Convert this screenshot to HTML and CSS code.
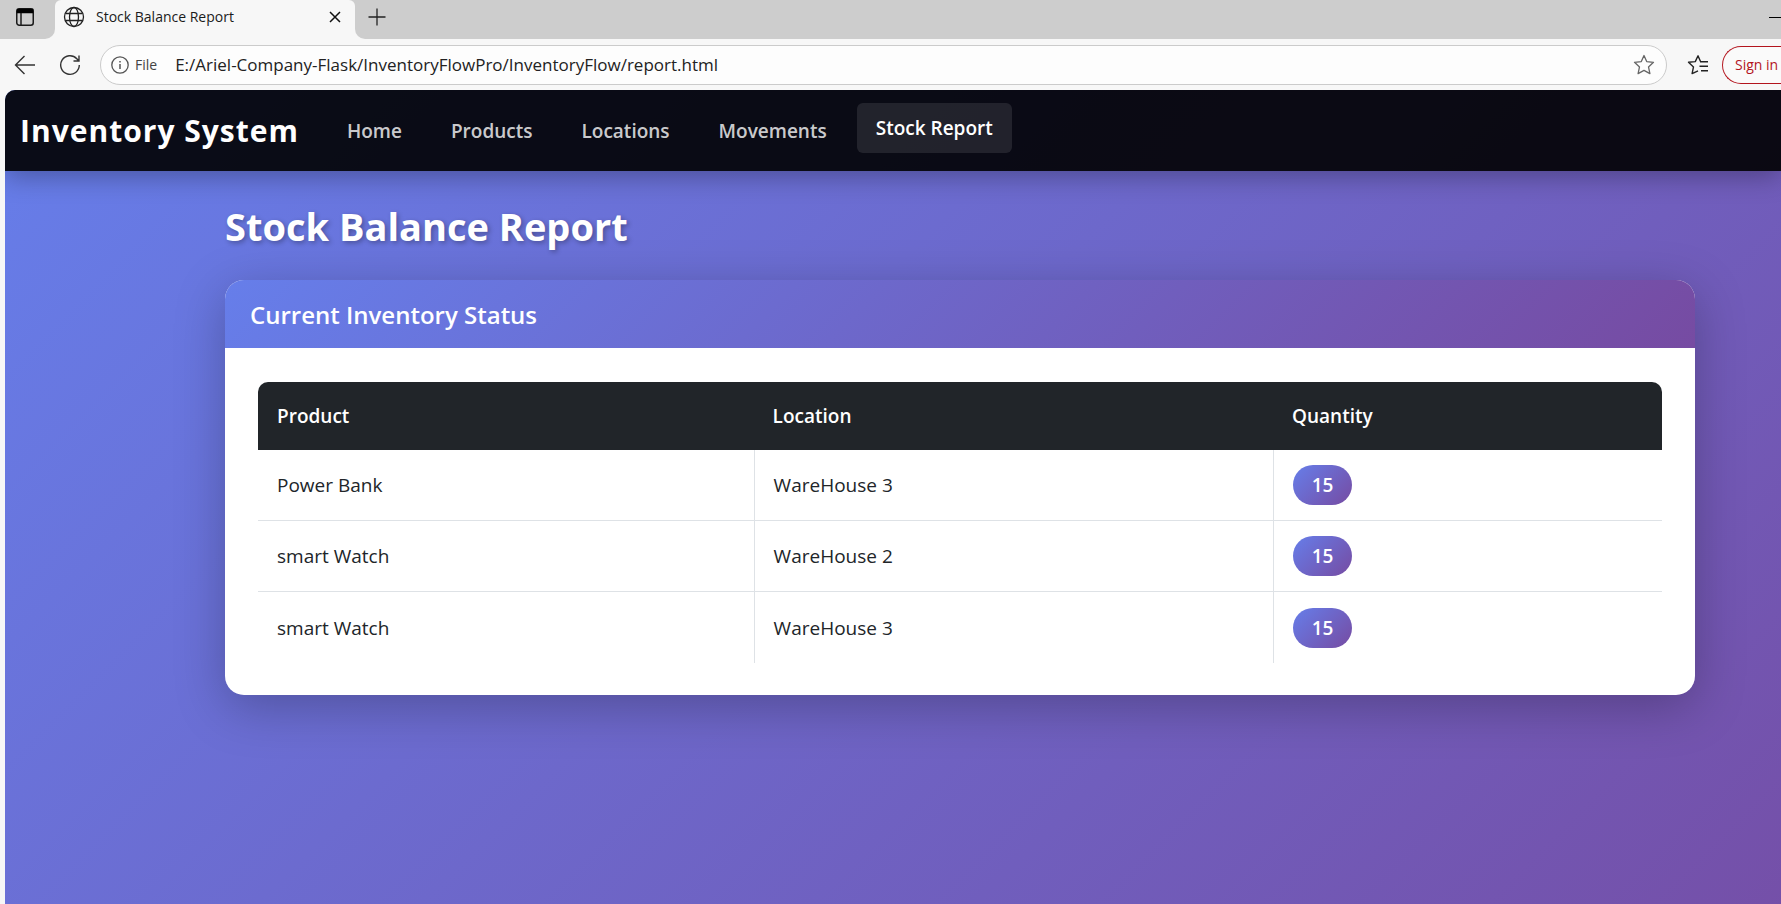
FILE: index.html
```html
<!DOCTYPE html>
<html lang="en">
<head>
<meta charset="utf-8">
<title>Stock Balance Report</title>
<link rel="stylesheet" href="styles.css">
</head>
<body>
<header class="browser">
  <div class="tabstrip">
    <div class="tab-actions">
      <button class="icon-btn" aria-label="Tab actions">
        <svg width="20" height="20" viewBox="0 0 20 20" fill="none" stroke="#1b1b1b" stroke-width="1.5"><rect x="1.75" y="1.75" width="16.5" height="16.5" rx="2.5"/><path d="M2.500 2.500h15v3h-15z" fill="#000" stroke="#000"/><path d="M6 6v12"/></svg>
      </button>
    </div>
    <div class="tab-slot">
      <div class="tab">
        <svg width="22" height="22" viewBox="0 0 22 22" fill="none" stroke="#222" stroke-width="1.3"><circle cx="11" cy="11" r="9.5"/><ellipse cx="11" cy="11" rx="4.5" ry="9.5"/><path d="M2.5 7.5h17M2.5 14.5h17"/></svg>
        <span class="tab-title">Stock Balance Report</span>
        <button class="icon-btn" aria-label="Close tab">
          <svg width="12" height="12" viewBox="0 0 12 12" fill="none" stroke="#111" stroke-width="1.5"><path d="M1 1l10 10M11 1L1 11"/></svg>
        </button>
      </div>
    </div>
    <div class="tab-rest">
      <button class="icon-btn" aria-label="New tab">
        <svg width="18" height="18" viewBox="0 0 18 18" fill="none" stroke="#222" stroke-width="1.3"><path d="M9 .5v17M.5 9h17"/></svg>
      </button>
      <button class="icon-btn" aria-label="Minimize">
        <svg width="12" height="12" viewBox="0 0 12 12" fill="none" stroke="#000"><path d="M0 6.5h12"/></svg>
      </button>
    </div>
  </div>
  <div class="toolbar">
    <button class="icon-btn" aria-label="Back">
      <svg width="22" height="20" viewBox="0 0 22 20" fill="none" stroke="#333" stroke-width="1.4"><path d="M21 10H1.5M10.500 1L1.500 10l9 9"/></svg>
    </button>
    <button class="icon-btn" aria-label="Refresh">
      <svg width="22" height="22" viewBox="0 0 22 22" fill="none" stroke="#333" stroke-width="1.4"><path d="M20.300 11A9.300 9.300 0 1 1 17.800 4.700L19.500 6.500M20 1.500v5.500h-5.500"/></svg>
    </button>
    <div class="address">
      <svg width="18" height="18" viewBox="0 0 18 18" fill="none" stroke="#555" stroke-width="1.3"><circle cx="9" cy="9" r="8.200"/><path d="M9 8v5M9 5v1.500" stroke-width="1.500"/></svg>
      <label class="scheme" for="url">File</label>
      <input class="url" id="url" type="text" value="E:/Ariel-Company-Flask/InventoryFlowPro/InventoryFlow/report.html">
      <button class="icon-btn" aria-label="Add to favorites">
        <svg width="22" height="22" viewBox="0 0 22 22" fill="none" stroke="#666" stroke-width="1.3" stroke-linejoin="round"><path d="M11 1.500l2.700 6.100 6.800.7-5 4.600 1.400 6.700L11 16.400l-5.900 3.200 1.400-6.700-5-4.600 6.800-.7z"/></svg>
      </button>
    </div>
    <button class="icon-btn" aria-label="Favorites">
      <svg width="22" height="22" viewBox="0 0 22 22" fill="none" stroke="#222" stroke-width="1.400" stroke-linejoin="round"><path d="M13.500 7.500L11 1.800 8.300 7.600l-6.800.7 5 4.600-1.400 6.700L11 16.800M13 7.700h8M12.500 12.200h8.500M14 16.700h7"/></svg>
    </button>
    <button class="sign-in">Sign in</button>
  </div>
</header>
<div class="viewport">
  <nav class="navbar">
    <a class="brand" href="#">Inventory System</a>
    <div class="nav-links">
      <a class="nav-link" href="#">Home</a>
      <a class="nav-link" href="#">Products</a>
      <a class="nav-link" href="#">Locations</a>
      <a class="nav-link" href="#">Movements</a>
      <a class="nav-link active" href="#" aria-current="page">Stock Report</a>
    </div>
  </nav>
  <main class="content">
    <h1 class="page-title">Stock Balance Report</h1>
    <section class="card">
      <h2 class="card-header">Current Inventory Status</h2>
      <div class="card-body">
        <table class="stock">
          <colgroup><col class="col-product"><col class="col-location"><col></colgroup>
          <thead><tr><th>Product</th><th>Location</th><th>Quantity</th></tr></thead>
          <tbody>
            <tr><td>Power Bank</td><td>WareHouse 3</td><td><span class="badge">15</span></td></tr>
            <tr><td>smart Watch</td><td>WareHouse 2</td><td><span class="badge">15</span></td></tr>
            <tr><td>smart Watch</td><td>WareHouse 3</td><td><span class="badge">15</span></td></tr>
          </tbody>
        </table>
      </div>
    </section>
  </main>
</div>
</body>
</html>
```

FILE: styles.css
```css
* { box-sizing: border-box; }

body {
  margin: 0;
  min-height: 100vh;
  display: flex;
  flex-direction: column;
  overflow-x: hidden;
  background: #f7f7f7;
  color: #212529;
  font-family: "Segoe UI", "Open Sans", "Noto Sans", sans-serif;
  font-size: 19px;
  line-height: 30px;
}

svg { display: block; }
a { text-decoration: none; }

.icon-btn {
  flex: none;
  padding: 0;
  border: 0;
  background: none;
}

/* Browser chrome */
.tabstrip { display: flex; height: 39px; }

.tab-actions {
  width: 55px;
  padding: 5px 0 0 15px;
  background: #cdcdcd;
  border-bottom-right-radius: 10px;
}

.tab-slot {
  width: 300px;
  background: linear-gradient(#cdcdcd 12px, #f7f7f7 12px);
}

.tab {
  height: 39px;
  display: flex;
  align-items: center;
  gap: 11px;
  padding: 0 14px 5px 8px;
  border-radius: 6px 6px 0 0;
  background: #f7f7f7;
}

.tab-title {
  flex: 1;
  color: #1b1b1b;
  font-size: 14px;
  line-height: 20px;
}

.tab-rest {
  flex: 1;
  display: flex;
  justify-content: space-between;
  align-items: center;
  padding: 0 0 5px 13px;
  background: #cdcdcd;
  border-bottom-left-radius: 10px;
}

.toolbar {
  display: flex;
  align-items: center;
  padding: 6px 0 5px 14px;
}

.toolbar > .icon-btn + .icon-btn { margin-left: 23px; }

.address {
  flex: 1;
  display: flex;
  align-items: center;
  height: 40px;
  margin: 0 20px 0 19px;
  padding: 0 11px 0 10px;
  border: 1px solid #cbcbcb;
  border-radius: 20px;
  background: #fdfdfd;
}

.scheme {
  margin: 0 18px 0 6px;
  color: #444;
  font-size: 14px;
}

.url {
  flex: 1;
  min-width: 0;
  padding: 0;
  border: 0;
  outline: 0;
  background: none;
  color: #222;
  font: inherit;
  font-size: 17px;
}

.sign-in {
  width: 59px;
  height: 38px;
  margin-left: 13px;
  padding: 0 0 0 12px;
  border: 1px solid #b3141d;
  border-right: 0;
  border-radius: 19px 0 0 19px;
  background: #fafafa;
  color: #b3141d;
  font: inherit;
  font-size: 14px;
  text-align: left;
  white-space: nowrap;
}

/* Page */
.viewport {
  flex: 1;
  margin-left: 5px;
  overflow: hidden;
  border-top-left-radius: 10px;
  background: linear-gradient(135deg, #667eea 0%, #764ba2 110%);
}

.navbar {
  display: flex;
  align-items: center;
  gap: 29px;
  padding: 15px;
  min-height: 81px;
  background: rgba(0, 0, 0, 0.9);
  box-shadow: 0 5px 25px rgba(0, 0, 0, 0.3);
}

.brand {
  color: #fff;
  font-size: 30px;
  font-weight: 700;
  line-height: 40px;
  letter-spacing: 1px;
}

.nav-links { display: flex; gap: 11px; }

.nav-link {
  padding: 10px 19px;
  border-radius: 6px;
  color: rgba(255, 255, 255, 0.8);
  font-weight: 600;
}

.nav-link.active {
  background: rgba(255, 255, 255, 0.1);
  color: #fff;
  transform: translateY(-3px);
}

.content { padding: 31px 86px 40px 220px; }

.page-title {
  margin: 0 0 30px;
  color: #fff;
  font-size: 38px;
  font-weight: 700;
  line-height: 48px;
  text-shadow: 2px 2px 5px rgba(0, 0, 0, 0.3);
}

.card {
  overflow: hidden;
  border-radius: 19px;
  background: #fff;
  box-shadow: 0 12px 50px rgba(0, 0, 0, 0.25);
}

.card-header {
  margin: 0;
  padding: 20px 25px 18px;
  background: linear-gradient(135deg, #667eea, #764ba2);
  color: #fff;
  font-size: 24px;
  font-weight: 600;
  line-height: 30px;
}

.card-body { padding: 34px 33px 32px; }

.stock {
  width: 100%;
  border-spacing: 0;
  border-radius: 10px;
  overflow: hidden;
  table-layout: fixed;
}

.col-product { width: 35.3%; }
.col-location { width: 37%; }

.stock th {
  padding: 19px;
  background: #212529;
  color: #fff;
  font-weight: 600;
  text-align: left;
}

.stock td {
  height: 71px;
  padding: 15px 19px;
  border-bottom: 1px solid #dee2e6;
}

.stock td + td { border-left: 1px solid #dee2e6; }
.stock tr:last-child td { border-bottom: 0; }

.badge {
  display: block;
  width: 59px;
  height: 40px;
  border-radius: 20px;
  background: linear-gradient(135deg, #667eea, #764ba2);
  color: #fff;
  font-weight: 600;
  line-height: 40px;
  text-align: center;
}
```
